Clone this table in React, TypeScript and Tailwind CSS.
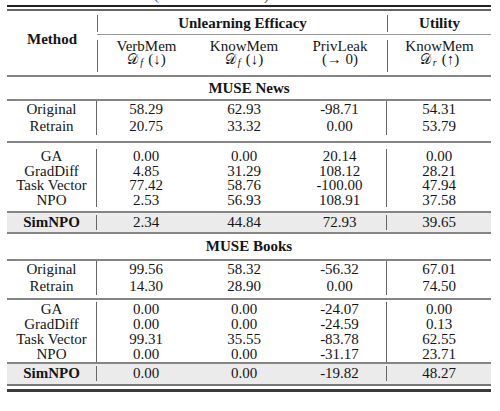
import React from "react";

const GRID = "grid grid-cols-[90px_98px_98px_94px_104px]";

type Row = string[];

const newsBase: Row[] = [
  ["Original", "58.29", "62.93", "-98.71", "54.31"],
  ["Retrain", "20.75", "33.32", "0.00", "53.79"],
];
const newsMethods: Row[] = [
  ["GA", "0.00", "0.00", "20.14", "0.00"],
  ["GradDiff", "4.85", "31.29", "108.12", "28.21"],
  ["Task Vector", "77.42", "58.76", "-100.00", "47.94"],
  ["NPO", "2.53", "56.93", "108.91", "37.58"],
];
const newsSim: Row[] = [["SimNPO", "2.34", "44.84", "72.93", "39.65"]];

const booksBase: Row[] = [
  ["Original", "99.56", "58.32", "-56.32", "67.01"],
  ["Retrain", "14.30", "28.90", "0.00", "74.50"],
];
const booksMethods: Row[] = [
  ["GA", "0.00", "0.00", "-24.07", "0.00"],
  ["GradDiff", "0.00", "0.00", "-24.59", "0.13"],
  ["Task Vector", "99.31", "35.55", "-83.78", "62.55"],
  ["NPO", "0.00", "0.00", "-31.17", "23.71"],
];
const booksSim: Row[] = [["SimNPO", "0.00", "0.00", "-19.82", "48.27"]];

function Block({
  rows,
  lh,
  pad,
  bg = "",
  bold = false,
}: {
  rows: Row[];
  lh: string;
  pad: string;
  bg?: string;
  bold?: boolean;
}) {
  return (
    <div className={`${bg}`}>
      <div className={`${GRID} ${pad}`}>
        {[0, 1, 2, 3, 4].map((c) => (
          <div
            key={c}
            className={`text-center ${c === 0 || c === 3 ? "border-r border-[#666]" : ""}`}
          >
            {rows.map((r, i) => (
              <div key={i} className={`${lh} whitespace-nowrap ${c === 0 && bold ? "font-bold" : ""}`}>
                {r[c]}
              </div>
            ))}
          </div>
        ))}
      </div>
    </div>
  );
}

function Mid() {
  return <div className="h-[2px] bg-[#858585]" />;
}

function Df({ sub, arrow }: { sub: string; arrow: string }) {
  return (
    <div className="h-[13px] leading-[13px] whitespace-nowrap flex items-baseline">
      <span className="font-['DejaVu_Serif','DejaVu_Sans',serif] text-[14px]">𝒟</span>
      <span className="italic text-[10px] ml-[2px] relative top-[2px]">{sub}</span>
      <span className="ml-[5px]">({arrow})</span>
    </div>
  );
}

export default function App() {
  return (
    <div className="w-[500px] h-[411px] bg-white overflow-hidden text-[#151515] text-[15px] font-['Liberation_Serif','Times_New_Roman',serif]">
      <div className="h-[5px] overflow-hidden">
        <div className="flex pl-[154px] text-[15px] leading-[15px] -mt-[12px] text-[#555]">
          <span>(</span>
          <span className="w-[105px]" />
          <span>)</span>
        </div>
      </div>
      <div className="ml-[7px] w-[484px]">
        <div className="h-[2px] bg-[#222]" />
        <div className="h-[2px]" />
        <div className="h-[2px] bg-[#666]" />
        {/* header */}
        <div className={`${GRID} grid-rows-[23px_1px_40px]`}>
          <div className="row-span-3 flex items-center justify-center font-bold pb-[8px]">Method</div>
          <div className="col-span-3 border-l border-[#666] mt-[4px] mb-[2px] flex items-center justify-center font-bold">
            Unlearning Efficacy
          </div>
          <div className="border-l border-[#666] mt-[4px] mb-[2px] flex items-center justify-center font-bold">
            Utility
          </div>
          <div className="col-span-4 h-px bg-[#999]" />
          <div className="border-l border-[#666] mt-[5px] mb-[3px] flex flex-col items-center">
            <div className="h-[13px] leading-[13px]">VerbMem</div>
            <Df sub="f" arrow="↓" />
          </div>
          <div className="mt-[5px] mb-[3px] flex flex-col items-center">
            <div className="h-[13px] leading-[13px]">KnowMem</div>
            <Df sub="f" arrow="↓" />
          </div>
          <div className="mt-[5px] mb-[3px] flex flex-col items-center">
            <div className="h-[13px] leading-[13px]">PrivLeak</div>
            <div className="h-[13px] leading-[13px] whitespace-nowrap">(→ 0)</div>
          </div>
          <div className="border-l border-[#666] mt-[5px] mb-[3px] flex flex-col items-center">
            <div className="h-[13px] leading-[13px]">KnowMem</div>
            <Df sub="r" arrow="↑" />
          </div>
        </div>
        <Mid />
        <div className="h-[22px] flex items-center justify-center font-bold">MUSE News</div>
        <Mid />
        <Block rows={newsBase} lh="h-[17px] leading-[17px]" pad="pt-0 pb-[6px]" />
        <Mid />
        <Block rows={newsMethods} lh="h-[14.5px] leading-[14.5px]" pad="pt-[6px] pb-[4px]" />
        <Mid />
        <Block rows={newsSim} lh="h-[15px] leading-[15px]" pad="pt-[2px] pb-[2px]" bg="bg-[#ebebeb]" bold />
        <Mid />
        <div className="h-[25px] flex items-center justify-center font-bold">MUSE Books</div>
        <Mid />
        <Block rows={booksBase} lh="h-[17px] leading-[17px]" pad="pt-0 pb-[3px]" />
        <Mid />
        <Block rows={booksMethods} lh="h-[15px] leading-[15px]" pad="pt-[2px] pb-0" />
        <Mid />
        <Block rows={booksSim} lh="h-[15px] leading-[15px]" pad="pt-[2px] pb-[3px]" bg="bg-[#ebebeb]" bold />
        <div className="h-[2px] bg-[#777]" />
        <div className="h-[3px]" />
        <div className="h-[3px] bg-[#3a3a3a]" />
      </div>
    </div>
  );
}
